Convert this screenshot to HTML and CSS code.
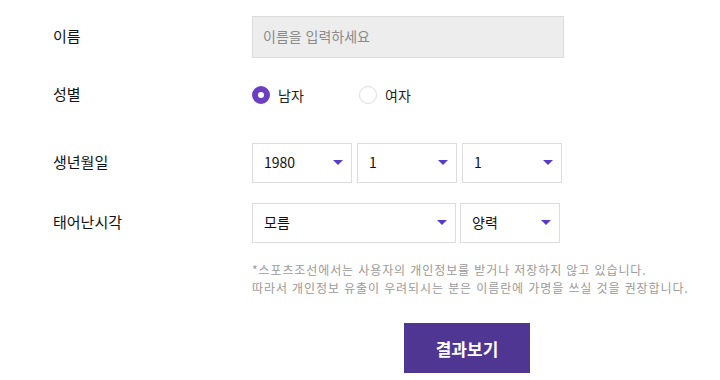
FILE: index.html
```html
<!DOCTYPE html>
<html lang="ko">
<head>
    <meta charset="UTF-8">
    <meta name="viewport" content="width=device-width, initial-scale=1.0">
    <title>사주 입력</title>
    <link rel="stylesheet" href="styles.css">
</head>
<body>
    <div class="form">
        <div class="row row-name">
            <label class="label" for="name">이름</label>
            <input type="text" id="name" class="name-input" placeholder="이름을 입력하세요">
        </div>

        <div class="row row-gender">
            <span class="label">성별</span>
            <div class="radios">
                <label class="radio checked"><span class="dot"></span>남자</label>
                <label class="radio"><span class="dot"></span>여자</label>
            </div>
        </div>

        <div class="row row-birth">
            <span class="label">생년월일</span>
            <div class="selects">
                <div class="select w100">1980<span class="arrow"></span></div>
                <div class="select w100">1<span class="arrow"></span></div>
                <div class="select w100">1<span class="arrow"></span></div>
            </div>
        </div>

        <div class="row row-time">
            <span class="label">태어난시각</span>
            <div class="selects gap4">
                <div class="select w204">모름<span class="arrow"></span></div>
                <div class="select w100">양력<span class="arrow"></span></div>
            </div>
        </div>

        <div class="row row-notice">
            <span class="label"></span>
            <p class="notice">*스포츠조선에서는 사용자의 개인정보를 받거나 저장하지 않고 있습니다.<br>따라서 개인정보 유출이 우려되시는 분은 이름란에 가명을 쓰실 것을 권장합니다.</p>
        </div>

        <div class="actions">
            <button class="submit">결과보기</button>
        </div>
    </div>
</body>
</html>
```

FILE: styles.css
```css
body {
    margin: 0;
    font-family: "Noto Sans CJK KR", "Liberation Sans", sans-serif;
    color: #222;
    background: #fff;
}
.form {
    padding: 16px 0 0 53px;
}
.row {
    display: flex;
    align-items: center;
}
.label {
    width: 199px;
    font-size: 15px;
    color: #111;
    padding-bottom: 3px;
}
.name-input {
    width: 312px;
    height: 42px;
    box-sizing: border-box;
    border: 1px solid #dcdcdc;
    background: #ededed;
    padding: 0 10px 2px;
    font-family: inherit;
    font-size: 14px;
    outline: none;
}
.name-input::placeholder {
    color: #8a8a8a;
}
.row-gender {
    margin-top: 18px;
    height: 38px;
}
.radios {
    display: flex;
}
.radio {
    display: flex;
    align-items: center;
    font-size: 14px;
    color: #222;
    width: 107px;
}
.dot {
    width: 18px;
    height: 18px;
    box-sizing: border-box;
    border-radius: 50%;
    border: 1px solid #ddd;
    margin-right: 8px;
    background: #fff;
}
.radio.checked .dot {
    border: 6px solid #6a3fc2;
    background: #fff;
}
.row-birth {
    margin-top: 29px;
}
.row-time {
    margin-top: 20px;
}
.selects {
    display: flex;
    gap: 5px;
}
.selects.gap4 {
    gap: 4px;
}
.select {
    position: relative;
    height: 40px;
    box-sizing: border-box;
    border: 1px solid #dcdcdc;
    padding: 0 0 2px 11px;
    display: flex;
    align-items: center;
    font-size: 14px;
    color: #111;
}
.w100 {
    width: 100px;
}
.w204 {
    width: 204px;
}
.arrow {
    position: absolute;
    right: 8px;
    top: 16px;
    width: 0;
    height: 0;
    border-left: 5px solid transparent;
    border-right: 5px solid transparent;
    border-top: 5px solid #5a3ac8;
}
.row-notice {
    margin-top: 18px;
    align-items: flex-start;
}
.notice {
    margin: 0;
    font-size: 12px;
    line-height: 18px;
    letter-spacing: 0.9px;
    color: #9a9a9a;
}
.actions {
    padding-left: 351px;
    margin-top: 26px;
}
.submit {
    width: 126px;
    height: 50px;
    border: none;
    background: #4f3693;
    color: #fff;
    font-family: inherit;
    font-size: 17px;
    font-weight: bold;
    cursor: pointer;
}
```
